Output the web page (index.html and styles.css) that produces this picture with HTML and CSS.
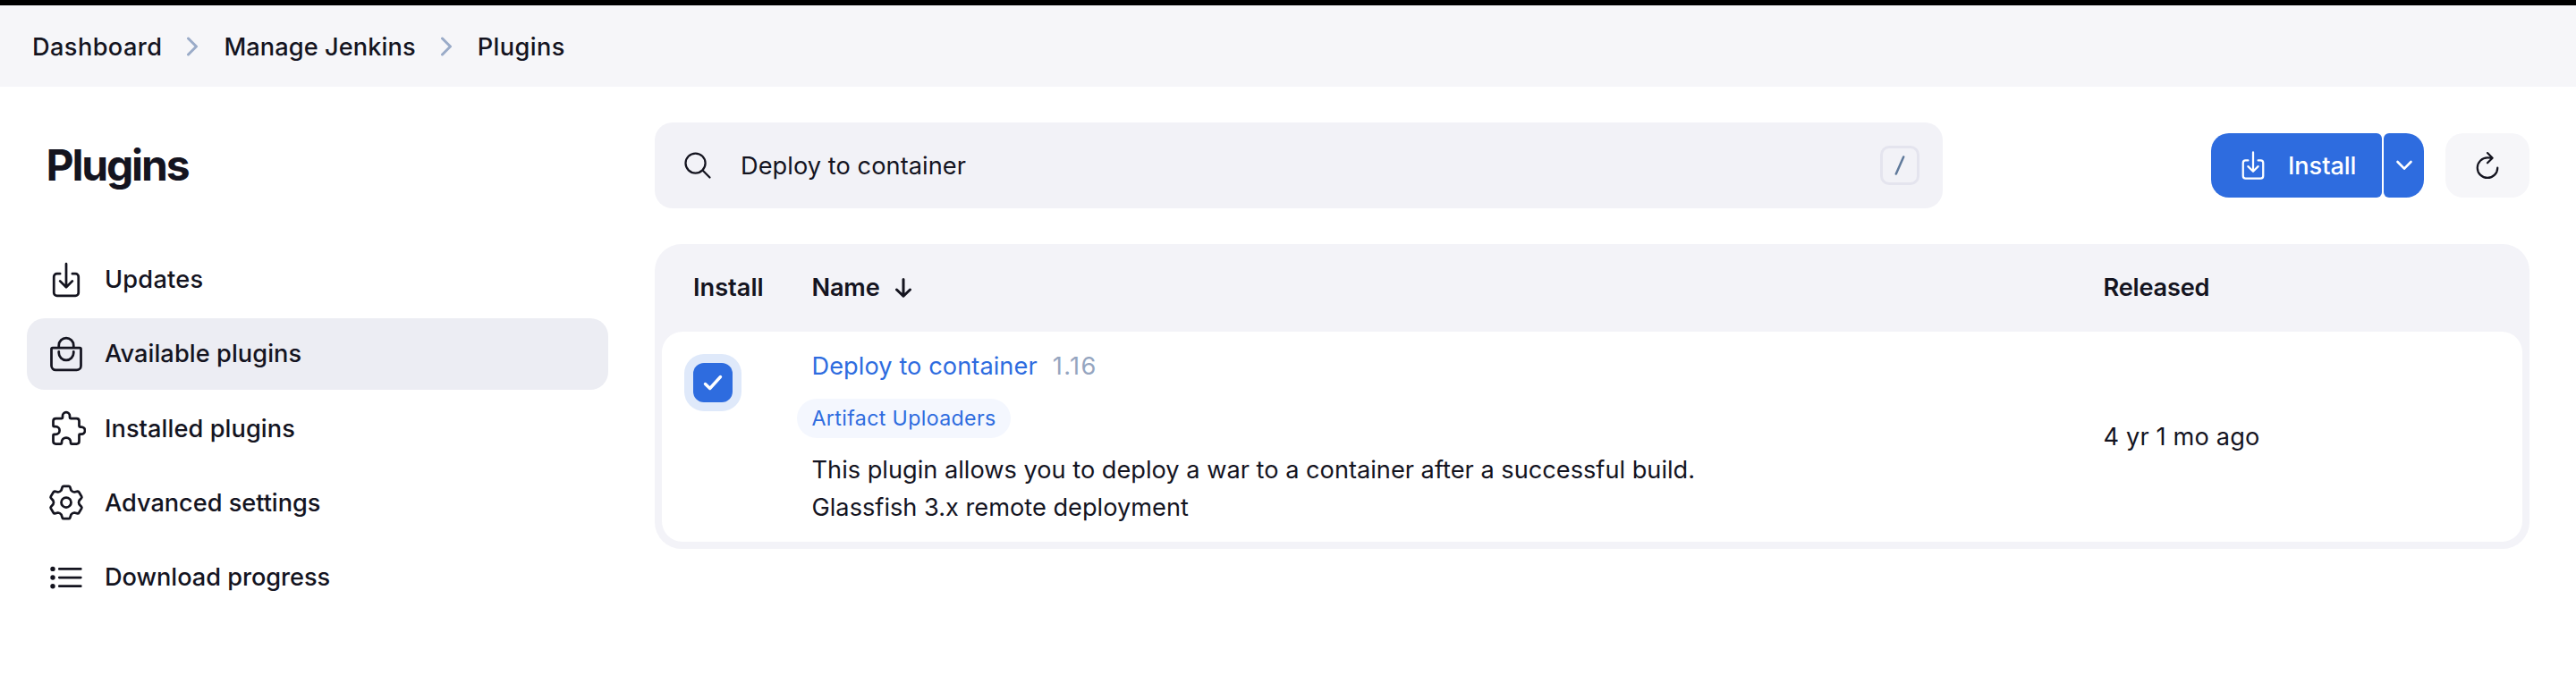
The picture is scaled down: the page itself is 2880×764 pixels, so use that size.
FILE: index.html
```
<!DOCTYPE html>
<html lang="en">
<head>
<meta charset="utf-8">
<title>Plugins - Jenkins</title>
<link rel="stylesheet" href="styles.css">
</head>
<body>
<svg class="symbols" width="0" height="0">
  <symbol id="download" viewBox="0 0 512 512"><path d="M336 176h40a40 40 0 0140 40v208a40 40 0 01-40 40H136a40 40 0 01-40-40V216a40 40 0 0140-40h40M176 272l80 80 80-80M256 48v288"/></symbol>
  <symbol id="chevron" viewBox="0 0 14 22"><path d="M2.500 2L11.500 11l-9 9"/></symbol>
</svg>
<nav class="breadcrumbs">
  <a class="crumb crumb-dashboard">Dashboard</a>
  <svg class="separator"><use href="#chevron"/></svg>
  <a class="crumb crumb-manage">Manage Jenkins</a>
  <svg class="separator"><use href="#chevron"/></svg>
  <a class="crumb crumb-plugins">Plugins</a>
</nav>
<div class="page">
  <aside class="sidebar">
    <h1>Plugins</h1>
    <div class="tasks">
      <a class="task task-updates"><svg class="icon line"><use href="#download"/></svg><span>Updates</span></a>
      <a class="task active"><svg class="icon line" viewBox="0 0 512 512"><path d="M80 176a16 16 0 00-16 16v216c0 30.240 25.760 56 56 56h272c30.240 0 56-24.510 56-54.750V192a16 16 0 00-16-16zM160 176v-32a96 96 0 0196-96h0a96 96 0 0196 96v32M160 224v16a96 96 0 0096 96h0a96 96 0 0096-96v-16"/></svg><span>Available plugins</span></a>
      <a class="task"><svg class="icon fine" viewBox="0 0 44 44"><path d="M7.500 19.200V14q0-3 3-3H17a1 1 0 001-1V8.200a4 4 0 018 0V10a1 1 0 001 1h6.500q3 0 3 3v5.600a1 1 0 001 1H39a4 4 0 010 8h-1.500a1 1 0 00-1 1v7q0 3-3 3H28a1 1 0 01-1-1v-1a5 5 0 00-10 0v1a1 1 0 01-1 1h-5.500q-3 0-3-3v-6.800a1 1 0 011-1h1.800a4.300 4.300 0 000-8.600H8.500a1 1 0 01-1-1z"/></svg><span>Installed plugins</span></a>
      <a class="task task-advanced"><svg class="icon fine" viewBox="-22 -22 44 44"><path d="M-5.500-13.500L-4.300-17.200Q-3.900-18.200-2.900-18.200H2.900Q3.900-18.200 4.300-17.200L5.500-13.500Q7-11.600 9-11.500L12.800-12.300Q13.800-12.400 14.300-11.500L17.200-6.600Q17.700-5.700 17-4.900L14.500-2Q13.500 0 14.500 2L17 4.900Q17.700 5.700 17.200 6.600L14.300 11.500Q13.800 12.400 12.800 12.300L9 11.500Q7 11.600 5.500 13.500L4.300 17.200Q3.900 18.200 2.900 18.200H-2.900Q-3.900 18.200-4.300 17.200L-5.500 13.500Q-7 11.600-9 11.500L-12.800 12.300Q-13.800 12.400-14.300 11.500L-17.200 6.600Q-17.700 5.700-17 4.900L-14.500 2Q-13.500 0-14.500-2L-17-4.900Q-17.700-5.700-17.200-6.600L-14.300-11.500Q-13.800-12.400-12.800-12.300L-9-11.500Q-7-11.600-5.500-13.500z"/><circle r="5.500"/></svg><span>Advanced settings</span></a>
      <a class="task task-download"><svg class="icon fine" viewBox="0 0 44 44"><path d="M14.300 12.400h24M14.300 22h24M14.300 31.700h24"/><g class="dots"><circle cx="7" cy="12.400" r="2.700"/><circle cx="7" cy="22" r="2.700"/><circle cx="7" cy="31.700" r="2.700"/></g></svg><span>Download progress</span></a>
    </div>
  </aside>
  <main class="main">
    <div class="toolbar">
      <div class="search">
        <svg class="icon-small line" viewBox="0 0 512 512"><path d="M221.090 64a157.090 157.090 0 10157.090 157.090A157.100 157.100 0 00221.090 64zM338.290 338.290L448 448"/></svg>
        <span class="query">Deploy to container</span>
        <kbd><svg viewBox="0 0 12 22"><path d="M1.800 20.500L10.200 1.500"/></svg></kbd>
      </div>
      <div class="split">
        <button class="install"><svg class="icon-small line"><use href="#download"/></svg><span class="install-label">Install</span></button>
        <button class="more"><svg viewBox="0 0 20 12"><path d="M2.500 2L10 9.700 17.500 2"/></svg></button>
      </div>
      <button class="refresh"><svg class="icon-small line" viewBox="0 0 512 512"><path d="M320 146s24.360-12-64-12a160 160 0 10160 160M256 58l80 80-80 80"/></svg></button>
    </div>
    <section class="table">
      <div class="row head">
        <span>Install</span>
        <div class="sortable"><span>Name</span><svg viewBox="0 0 20 24"><path d="M10 2.500V21M2.500 14L10 21.300 17.500 14"/></svg></div>
        <span class="released">Released</span>
      </div>
      <div class="row plugin">
        <div class="checkbox"><svg viewBox="0 0 44 44"><path d="M13.500 23.500L18.700 28.500 30.500 15.500"/></svg></div>
        <div class="details">
          <div class="name"><a class="link">Deploy to container</a><span class="version">1.16</span></div>
          <div class="badge">Artifact Uploaders</div>
          <div class="description">This plugin allows you to deploy a war to a container after a successful build.<br>Glassfish 3.x remote deployment</div>
        </div>
        <span class="age">4 yr 1 mo ago</span>
      </div>
    </section>
  </main>
</div>
</body>
</html>
```
FILE: styles.css
```
* {
  box-sizing: border-box;
}

body {
  margin: 0;
  height: 764px;
  overflow: hidden;
  background: #fff;
  border-top: 6px solid #000;
  color: #14141f;
  font: 400 27.2px/42px Inter, "Liberation Sans", sans-serif;
}

.symbols {
  position: absolute;
}

svg {
  display: block;
  flex: none;
  fill: none;
  stroke: currentColor;
  stroke-linecap: round;
  stroke-linejoin: round;
}

.line { stroke-width: 32; }
.fine { stroke-width: 2.75; }
.icon { width: 44px; height: 44px; }
.icon-small { width: 36px; height: 36px; }

.breadcrumbs {
  display: flex;
  align-items: center;
  height: 91px;
  padding: 0 36px;
  background: #f6f6f9;
  font-weight: 500;
}

.crumb { padding-top: 2px; }
.crumb-dashboard { letter-spacing: 0.4px; }
.crumb-manage { letter-spacing: 0.08px; }
.crumb-plugins { letter-spacing: 0.38px; }

.separator {
  width: 14px;
  height: 22px;
  margin: 0 28px 0 27px;
  color: #9aabc8;
  stroke-width: 3;
}

.page {
  display: grid;
  grid-template-columns: 650px 2096px;
  column-gap: 52px;
  padding: 40px 52px 0 30px;
}

h1 {
  margin: 0 0 39.8px;
  padding: 0 21.5px;
  font-size: 48px;
  font-weight: 700;
  line-height: 96px;
  letter-spacing: -2.18px;
}

.tasks {
  display: grid;
  row-gap: 3.2px;
  font-weight: 500;
  letter-spacing: 0.07px;
}

.task {
  display: flex;
  align-items: center;
  gap: 21px;
  height: 80px;
  padding: 0 22px;
  border-radius: 20px;
}

.task.active {
  background: #ecedf3;
}

.task-updates { letter-spacing: 0.22px; }
.task-advanced,
.task-download { letter-spacing: -0.04px; }

.task span { padding-top: 1px; }

.dots {
  fill: currentColor;
  stroke: none;
}

.toolbar {
  display: flex;
  align-items: center;
  height: 96px;
  margin-bottom: 40px;
}

.search {
  display: flex;
  align-items: center;
  width: 1440px;
  height: 96px;
  margin-right: auto;
  padding: 0 26px 0 30px;
  border-radius: 20px;
  background: #f2f2f7;
}

.query {
  margin: 0 auto 0 30px;
  padding-top: 2px;
  letter-spacing: 0.06px;
}

kbd {
  display: grid;
  place-items: center;
  width: 44px;
  height: 44px;
  border: 3px solid #e4e4ee;
  border-radius: 10px;
  color: #607a9b;
}

kbd svg {
  width: 12px;
  height: 22px;
  stroke-width: 2.5;
}

button {
  display: flex;
  align-items: center;
  justify-content: center;
  height: 72px;
  padding: 0;
  border: 0;
  font: inherit;
  color: #fff;
  background: #2e6cdf;
}

.split {
  display: flex;
  gap: 2px;
  margin-right: 24px;
}

.install {
  justify-content: flex-start;
  gap: 21px;
  width: 191px;
  padding-left: 29px;
  border-radius: 20px 6px 6px 20px;
  font-weight: 500;
  letter-spacing: -0.08px;
}

.install-label {
  padding-top: 2px;
}

.more {
  width: 45px;
  border-radius: 6px 20px 20px 6px;
}

.more svg {
  width: 20px;
  height: 12px;
  stroke-width: 2.6;
}

.refresh {
  width: 94px;
  border-radius: 20px;
  background: #f6f6f9;
  color: #14141f;
}

.table {
  padding: 0 8px 8px;
  border-radius: 30px;
  background: #f3f3f8;
}

.row {
  display: grid;
  grid-template-columns: 132.5px 1444px 1fr;
  padding-left: 35px;
}

.head {
  height: 98px;
  align-items: center;
  font-weight: 600;
}

.sortable {
  display: flex;
  align-items: center;
  gap: 16px;
  letter-spacing: -0.2px;
}

.sortable svg {
  width: 20px;
  height: 24px;
  stroke-width: 3;
}

.released { letter-spacing: -0.22px; }

.plugin {
  height: 235px;
  border-radius: 23px;
  background: #fff;
}

.checkbox {
  width: 44px;
  height: 44px;
  margin-top: 35px;
  border-radius: 12px;
  background: #2e6cdf;
  box-shadow: 0 0 0 10px #dfe9fa;
  color: #fff;
  stroke-width: 3.4;
}

.details {
  padding-top: 17.5px;
}

.name {
  display: flex;
  gap: 17px;
}

.link {
  color: #2e6cdf;
  letter-spacing: 0.07px;
}

.version {
  color: #95a5bf;
  letter-spacing: 1.4px;
}

.badge {
  width: 239px;
  height: 44px;
  margin: 15.5px 0 15px -17px;
  padding: 1px 0 0 17px;
  border-radius: 22px;
  background: #f4f7fe;
  color: #2e6cdf;
  font-size: 23.2px;
  line-height: 43px;
  letter-spacing: 0.35px;
}

.age {
  align-self: center;
  letter-spacing: 0.14px;
}
```
